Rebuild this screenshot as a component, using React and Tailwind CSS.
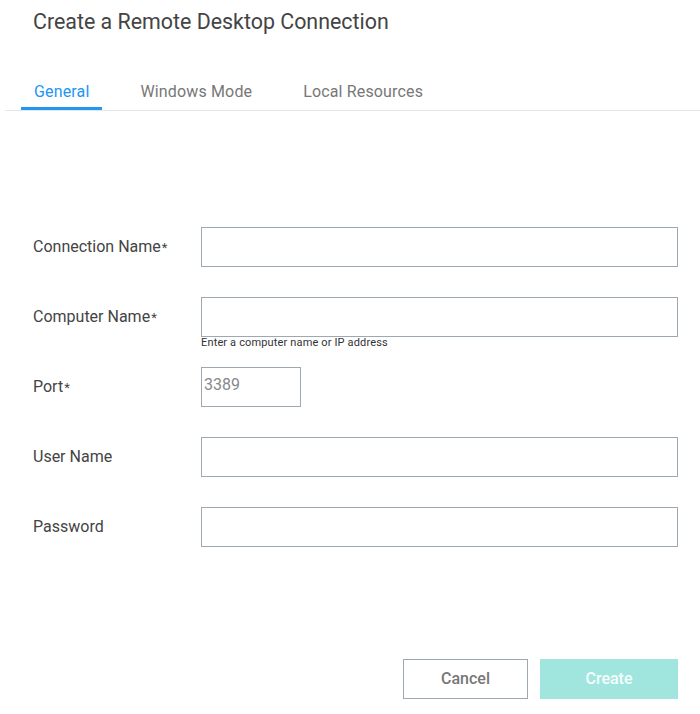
import React from "react";

function Row({ label, req, children }) {
  return (
    <div className="flex items-start h-[40px]">
      <div className="w-[168px] h-[40px] flex items-center text-[16px] text-[#444]">
        <span>
          {label}
          {req && <span className="text-[13px] ml-[1px]">*</span>}
        </span>
      </div>
      {children}
    </div>
  );
}

export default function App() {
  return (
    <div className="w-[700px] h-[714px] bg-white overflow-hidden" style={{ fontFamily: "Roboto, 'Liberation Sans', sans-serif" }}>
      <div className="pl-[33px] pt-[8px] h-[50px] text-[21.4px] text-[#444] leading-[28px]">Create a Remote Desktop Connection</div>
      <div className="ml-[5px] mt-[22px] border-b border-[#e3e8eb] flex pl-[16px] gap-[25px] h-[39px] tracking-[0.15px]">
        <div className="px-[13px] h-full flex items-center text-[16px] text-[#2196f3] border-b-[3px] border-[#2196f3] pt-[5px]">General</div>
        <div className="px-[13px] h-full flex items-center text-[16px] text-[#777] pt-[5px] border-b-[3px] border-transparent">Windows Mode</div>
        <div className="px-[13px] h-full flex items-center text-[16px] text-[#777] pt-[5px] border-b-[3px] border-transparent">Local Resources</div>
      </div>
      <div className="pl-[33px] pt-[116px] flex flex-col gap-[30px]">
        <Row label="Connection Name" req>
          <input className="w-[477px] h-[40px] border border-[#9ea8b0] outline-none px-[3px] text-[16px]" />
        </Row>
        <div className="relative">
          <Row label="Computer Name" req>
            <input className="w-[477px] h-[40px] border border-[#9ea8b0] outline-none px-[3px] text-[16px]" />
          </Row>
          <div className="absolute left-[168px] top-[39px] text-[11px] tracking-[0.15px] text-[#333] leading-[14px]">Enter a computer name or IP address</div>
        </div>
        <Row label="Port" req>
          <input placeholder="3389" className="w-[100px] h-[40px] border border-[#9ea8b0] outline-none px-[2px] pb-[5px] text-[16px] placeholder:text-[#888]" />
        </Row>
        <Row label="User Name">
          <input className="w-[477px] h-[40px] border border-[#9ea8b0] outline-none px-[3px] text-[16px]" />
        </Row>
        <Row label="Password">
          <input type="password" className="w-[477px] h-[40px] border border-[#9ea8b0] outline-none px-[3px] text-[16px]" />
        </Row>
      </div>
      <div className="flex justify-end gap-[12px] pr-[22px] mt-[112px]">
        <button className="w-[125px] h-[40px] border border-[#9ea8b0] bg-white text-[16px] font-medium text-[#777]">Cancel</button>
        <button className="w-[138px] h-[40px] bg-[#a0e6de] text-[16px] font-medium text-white/90">Create</button>
      </div>
    </div>
  );
}
